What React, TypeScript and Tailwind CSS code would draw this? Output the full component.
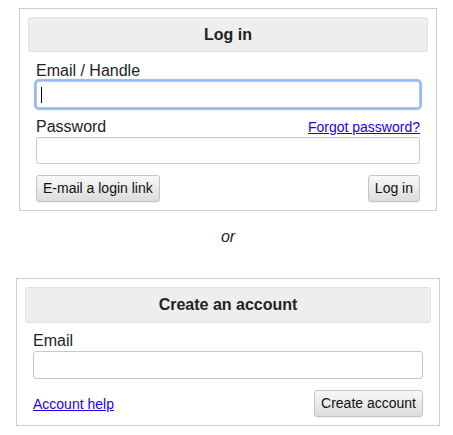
import React from "react";

const font = { fontFamily: '"Liberation Sans", Arial, Helvetica, sans-serif' };

const boxHeader =
	"h-[35px] flex items-center justify-center bg-[#eeeeee] border border-[#e2e2e2] rounded-[2px] font-bold text-[16px] text-[#222]";
const inputCls =
	"block w-full h-[27px] bg-white border border-[#c8c8c8] rounded-[3px] px-[4px] text-[14px] outline-none";
const btnCls =
	"h-[27px] px-[6px] text-[14px] text-[#111] border border-[#c4c4c4] rounded-[3px] bg-gradient-to-b from-[#f8f8f8] to-[#dcdcdc] shadow-[0_1px_0_rgba(0,0,0,0.05)]";
const linkCls = "text-[14px] text-[#2200ee] underline leading-[18px]";

export default function App() {
	return (
		<div className="min-h-[435px] bg-white pt-[8px] pl-[3px] text-[#222]" style={font}>
			<div className="w-[418px] mx-auto border border-[#cccccc] p-[8px]">
				<div className={boxHeader}>Log in</div>
				<div className="px-[8px]">
					<label className="block mt-[10px] text-[16px] leading-[18px]">Email / Handle</label>
					<div className="relative mt-[1px]">
						<input
							type="text"
							className={inputCls + " border-[#5b9cf2] shadow-[0_0_1px_2px_rgba(105,160,245,0.75)]"}
						/>
						<span className="absolute left-[5px] top-[6px] w-[1px] h-[16px] bg-black" />
					</div>
					<div className="flex justify-between items-end mt-[10px]">
						<label className="text-[16px] leading-[18px]">Password</label>
						<a href="#" className={linkCls}>
							Forgot password?
						</a>
					</div>
					<input type="password" className={inputCls + " mt-[1px]"} />
					<div className="flex justify-between mt-[11px]">
						<button className={btnCls}>E-mail a login link</button>
						<button className={btnCls}>Log in</button>
					</div>
				</div>
			</div>

			<div className="text-center italic text-[16px] leading-[18px] mt-[17px]">or</div>

			<div className="w-[424px] mx-auto mt-[32px] border border-[#cccccc] p-[8px]">
				<div className={boxHeader + " h-[36px]"}>Create an account</div>
				<div className="px-[8px]">
					<label className="block mt-[9px] text-[16px] leading-[18px]">Email</label>
					<input type="email" className={inputCls + " mt-[1px] h-[28px]"} />
					<div className="flex justify-between items-center mt-[11px]">
						<a href="#" className={linkCls}>
							Account help
						</a>
						<button className={btnCls}>Create account</button>
					</div>
				</div>
			</div>
		</div>
	);
}
